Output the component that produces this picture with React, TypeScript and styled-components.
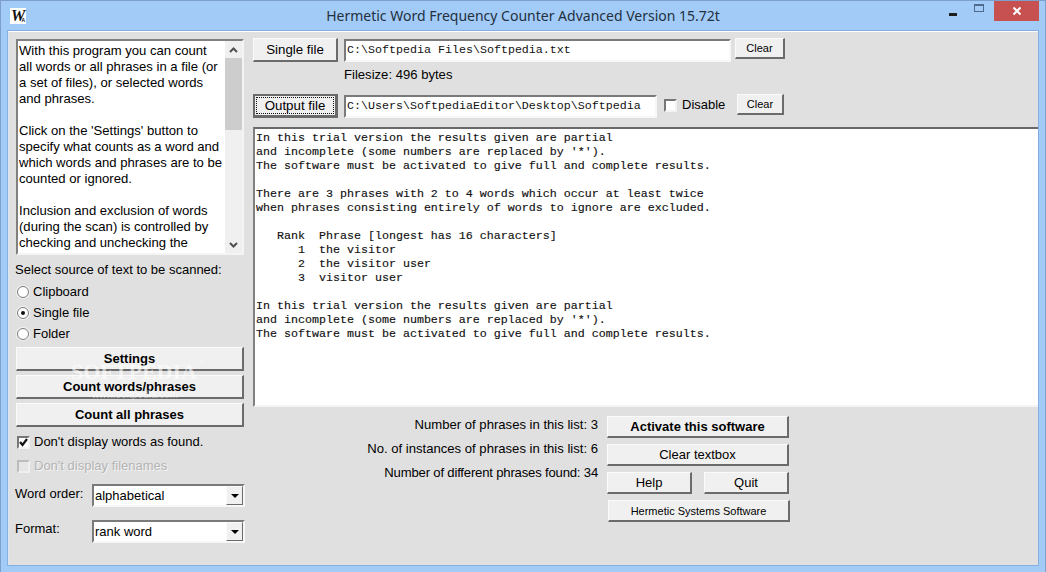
import React from "react";
import styled, { createGlobalStyle } from "styled-components";

const Global = createGlobalStyle`
  html, body { margin: 0; padding: 0; background: #a3cbf7; }
  * { box-sizing: border-box; }
`;

const Win = styled.div`
  width: 1046px; height: 572px; background: #a3cbf7; border: 1px solid #7f9fcb; border-bottom: 0;
  display: flex; flex-direction: column; overflow: hidden;
  font: 13.1px/16px "Liberation Sans", Arial, sans-serif; color: #000;
`;
const TitleBar = styled.div`
  height: 30px; flex: none; display: grid; grid-template-columns: 1fr auto 1fr; align-items: start;
`;
const Logo = styled.div`
  width: 16px; height: 16px; margin: 7px 0 0 9px; background: #fff; position: relative;
  font: italic bold 16px/15px "Liberation Serif", serif; color: #111;
  span { position: absolute; left: 1px; top: 0; letter-spacing: -1px; }
  small { position: absolute; right: 1px; bottom: 1px; font: bold 5px/5px "Liberation Sans", sans-serif; }
`;
const Title = styled.div`
  font: 14px/20px "Noto Sans", "Open Sans", sans-serif; color: #22303f; margin-top: 5px; white-space: nowrap;
`;
const Controls = styled.div`
  display: flex; justify-content: flex-end; align-items: flex-start; padding-right: 6px;
`;
const CtlBtn = styled.div`
  display: flex; align-items: center; justify-content: center; height: 20px;
`;
const MinBtn = styled(CtlBtn)`
  width: 27px;
  i { display: block; width: 8px; height: 3px; background: #1d1d1d; margin-top: 6px; }
`;
const MaxBtn = styled(CtlBtn)`
  width: 26px; margin-right: 2px;
  i { display: block; width: 10px; height: 8px; border: 1px solid #4e6a8d; border-top-width: 2px; margin-top: -7px; }
`;
const CloseBtn = styled(CtlBtn)`
  width: 45px; background: #c75050; color: #fff;
`;
const Client = styled.div`
  flex: 1; margin: 0 7px 7px 7px; background: #e0e0e0; border-top: 1px solid #fff; border-left: 1px solid #d9e6f5;
  display: grid; grid-template-columns: 228px 1fr; column-gap: 9px; padding: 7px 0 0 7px;
  outline: 1px solid #86aee0;
`;
const LeftCol = styled.div`
  display: flex; flex-direction: column; position: relative;
`;
const ListBox = styled.div`
  height: 216px; background: #fff; border: 2px solid; border-color: #808080 #f4f4f4 #f4f4f4 #808080;
  display: flex; overflow: hidden; flex: none;
`;
const ListText = styled.div`
  flex: 1; min-width: 0; padding: 2px 0 0 1px; white-space: pre; overflow: hidden;
`;
const Scroll = styled.div`
  width: 17px; background: #f0f0f0; display: flex; flex-direction: column; flex: none;
`;
const ScrollArrow = styled.div`
  height: 17px; display: flex; align-items: center; justify-content: center;
`;
const Thumb = styled.div`
  height: 72px; background: #cdcdcd; flex: none;
`;
const ScrollGap = styled.div`flex: 1;`;
const Label = styled.div<{ $tight?: boolean }>`
  white-space: nowrap;
  ${p => p.$tight && "letter-spacing: -0.18px;"}
`;
const SourceLabel = styled(Label)`margin: 7px 0 0 -1px; font-size: 13px;`;
const Radios = styled.div`
  display: flex; flex-direction: column; margin-top: 3px; font-size: 13px;
`;
const RadioRow = styled.div`
  height: 21px; display: flex; align-items: center; gap: 4px;
`;
const RadioDot = styled.span<{ $on?: boolean }>`
  width: 12px; height: 12px; border-radius: 50%; background: #fff; border: 1px solid #7a7a7a; margin-left: 1px;
  box-shadow: 0 0 0 1px #f2f2f2; position: relative; flex: none;
  &::after { content: ""; display: ${p => (p.$on ? "block" : "none")}; position: absolute; left: 3px; top: 3px; width: 4px; height: 4px; border-radius: 50%; background: #111; }
`;
const Btn = styled.div<{ $w?: number; $h?: number; $bold?: boolean; $size?: number }>`
  width: ${p => (p.$w ? `${p.$w}px` : "100%")}; height: ${p => p.$h ?? 24}px; flex: none;
  background: #f0f0f0; border-style: solid; border-width: 1px 2px 2px 1px; border-color: #fbfbfb #6b6b6b #6b6b6b #fbfbfb;
  display: flex; align-items: center; justify-content: center; white-space: nowrap;
  font-weight: ${p => (p.$bold ? 700 : 400)}; font-size: ${p => p.$size ?? 13}px;
`;
const BtnStack = styled.div`
  display: flex; flex-direction: column; gap: 4px; margin-top: 3px;
`;
const Check = styled.span<{ $disabled?: boolean }>`
  width: 13px; height: 13px; flex: none; background: ${p => (p.$disabled ? "#e6e6e6" : "#fff")};
  border: 2px solid; border-color: ${p => (p.$disabled ? "#bcbcbc #f0f0f0 #f0f0f0 #bcbcbc" : "#777 #f2f2f2 #f2f2f2 #777")};
  display: inline-flex; align-items: center; justify-content: center;
`;
const CheckRow = styled.div<{ $disabled?: boolean; $top: number }>`
  display: flex; align-items: center; gap: 4px; margin-top: ${p => p.$top}px; padding-left: 1px; font-size: 13px;
  color: ${p => (p.$disabled ? "#b4b4b4" : "#000")};
  ${p => p.$disabled && "text-shadow: 1px 1px 0 #f4f4f4;"}
`;
const SelectRow = styled.div<{ $top: number }>`
  display: flex; align-items: flex-start; width: 229px; margin-top: ${p => p.$top}px; justify-content: space-between;
`;
const SelectLabel = styled(Label)<{ $pad: number }>`
  margin-left: -1px; padding-top: ${p => p.$pad}px; font-size: 13px;
`;
const SelectBox = styled.div`
  width: 153px; height: 23px; background: #fff; border: 2px solid; border-color: #7a7a7a #f7f7f7 #f7f7f7 #7a7a7a;
  display: flex; align-items: center; padding-left: 1px; justify-content: space-between; font-size: 13px;
`;
const SelectArrow = styled.div`
  width: 17px; height: 19px; background: #f0f0f0; border: 1px solid; border-color: #fbfbfb #6b6b6b #6b6b6b #fbfbfb;
  display: flex; align-items: center; justify-content: center;
  &::after { content: ""; border: 4px solid transparent; border-top-color: #000; border-bottom: 0; }
`;
const RightCol = styled.div`
  display: flex; flex-direction: column; min-width: 0; margin-top: -1px;
`;
const FileRow = styled.div`
  display: flex; align-items: flex-start; height: 24px;
`;
const TextInput = styled.div<{ $w: number }>`
  width: ${p => p.$w}px; height: 23px; margin: 1px 0 0 6px; background: #fff; flex: none;
  border: 2px solid; border-color: #7a7a7a #f7f7f7 #f7f7f7 #7a7a7a; padding: 0 0 0 1px;
  font: 11.67px/19px "Liberation Mono", monospace; white-space: nowrap; overflow: hidden; color: #111;
`;
const Filesize = styled.div`
  margin: 5px 0 0 91px; height: 27px;
`;
const FocusBtn = styled(Btn)`
  border: 2px solid #6a6a6a; border-width: 2px 3px 3px 2px;
  position: relative;
  &::after { content: ""; position: absolute; inset: 1px; border: 1px dotted #111; }
`;
const DisableCheck = styled.div`
  display: flex; align-items: center; gap: 5px; margin: 3px 0 0 7px; width: 73px; flex: none; font-size: 13px;
`;
const ClearBtn = styled(Btn)<{ $gap: number }>`
  margin-left: ${p => p.$gap}px; font-size: 11px; padding-bottom: 1px;
`;
const Output = styled.div`
  height: 280px; margin-top: 9px; background: #fff; border-top: 2px solid #696969; border-left: 2px solid #808080;
  border-bottom: 2px solid #f4f4f4; padding: 2px 0 0 1px;
  font: 11.67px/14px "Liberation Mono", monospace; white-space: pre; color: #111; -webkit-text-stroke: 0.15px #111;
`;
const Bottom = styled.div`
  display: grid; grid-template-columns: 345px 182px; column-gap: 9px; margin-top: 9px;
`;
const Stats = styled.div`
  display: flex; flex-direction: column; gap: 8px; align-items: flex-end; padding-top: 1px;
`;
const Actions = styled.div`
  display: flex; flex-direction: column; gap: 6px;
`;
const ActionPair = styled.div`
  display: flex; justify-content: space-between;
`;
const OffsetBtn = styled(Btn)`margin-left: 1px; font-size: 11px;`;
const WMLayer = styled.div`
  position: absolute; left: 0; top: 0; width: 0; height: 0; pointer-events: none; z-index: 1;
`;
const Watermark = styled.div`
  position: absolute; left: 55px; top: 321px; color: #fff; opacity: 0.6;
  font: bold 22px/24px "Liberation Serif", serif; white-space: nowrap;
  sup { font: 5px/5px "Liberation Sans", sans-serif; vertical-align: top; margin-left: 2px; }
`;
const WatermarkSub = styled.div`
  position: absolute; left: 76px; top: 351px; color: #fff; opacity: 0.5;
  font: 10px/10px "Liberation Sans", sans-serif; white-space: nowrap;
`;

const listLines = `With this program you can count
all words or all phrases in a file (or
a set of files), or selected words
and phrases.

Click on the 'Settings' button to
specify what counts as a word and
which words and phrases are to be
counted or ignored.

Inclusion and exclusion of words
(during the scan) is controlled by
checking and unchecking the`;

const outputText = `In this trial version the results given are partial
and incomplete (some numbers are replaced by '*').
The software must be activated to give full and complete results.

There are 3 phrases with 2 to 4 words which occur at least twice
when phrases consisting entirely of words to ignore are excluded.

   Rank  Phrase [longest has 16 characters]
      1  the visitor
      2  the visitor user
      3  visitor user

In this trial version the results given are partial
and incomplete (some numbers are replaced by '*').
The software must be activated to give full and complete results.`;

const Chevron = ({ down }: { down?: boolean }) => (
  <svg width="9" height="6" viewBox="0 0 9 6">
    <path d={down ? "M1 1 L4.5 4.5 L8 1" : "M1 5 L4.5 1.5 L8 5"} fill="none" stroke="#505050" strokeWidth="2" />
  </svg>
);

const Tick = () => (
  <svg width="9" height="9" viewBox="0 0 9 9">
    <path d="M1 4 L3.5 7 L8 1" fill="none" stroke="#111" strokeWidth="2.2" />
  </svg>
);

export default function App() {
  return (
    <Win>
      <Global />
      <TitleBar>
        <Logo><span>W</span><small>A</small></Logo>
        <Title>Hermetic Word Frequency Counter Advanced Version 15.72t</Title>
        <Controls>
          <MinBtn><i /></MinBtn>
          <MaxBtn><i /></MaxBtn>
          <CloseBtn>
            <svg width="10" height="10" viewBox="0 0 10 10">
              <path d="M1.5 1.5 L8.5 8.5 M8.5 1.5 L1.5 8.5" stroke="#fff" strokeWidth="2" />
            </svg>
          </CloseBtn>
        </Controls>
      </TitleBar>
      <Client>
        <LeftCol>
          <ListBox>
            <ListText>{listLines}</ListText>
            <Scroll>
              <ScrollArrow><Chevron /></ScrollArrow>
              <Thumb />
              <ScrollGap />
              <ScrollArrow><Chevron down /></ScrollArrow>
            </Scroll>
          </ListBox>
          <SourceLabel>Select source of text to be scanned:</SourceLabel>
          <Radios>
            <RadioRow><RadioDot />Clipboard</RadioRow>
            <RadioRow><RadioDot $on />Single file</RadioRow>
            <RadioRow><RadioDot />Folder</RadioRow>
          </Radios>
          <BtnStack>
            <Btn $bold>Settings</Btn>
            <Btn $bold>Count words/phrases</Btn>
            <Btn $bold>Count all phrases</Btn>
          </BtnStack>
          <WMLayer>
            <Watermark>SOFTPEDIA<sup>™</sup></Watermark>
            <WatermarkSub>www.softpedia.com</WatermarkSub>
          </WMLayer>
          <CheckRow $top={7}><Check><Tick /></Check>Don't display words as found.</CheckRow>
          <CheckRow $top={8} $disabled><Check $disabled />Don't display filenames</CheckRow>
          <SelectRow $top={10}>
            <SelectLabel $pad={2}>Word order:</SelectLabel>
            <SelectBox>alphabetical<SelectArrow /></SelectBox>
          </SelectRow>
          <SelectRow $top={13}>
            <SelectLabel $pad={1}>Format:</SelectLabel>
            <SelectBox>rank word<SelectArrow /></SelectBox>
          </SelectRow>
        </LeftCol>
        <RightCol>
          <FileRow>
            <Btn $w={85} $size={13.3}>Single file</Btn>
            <TextInput $w={387}>C:\Softpedia Files\Softpedia.txt</TextInput>
            <ClearBtn $w={50} $h={21} $gap={4}>Clear</ClearBtn>
          </FileRow>
          <Filesize>Filesize: 496 bytes</Filesize>
          <FileRow>
            <FocusBtn $w={85} $size={13.3}>Output file</FocusBtn>
            <TextInput $w={313}>C:\Users\SoftpediaEditor\Desktop\Softpedia</TextInput>
            <DisableCheck><Check />Disable</DisableCheck>
            <ClearBtn $w={47} $h={21} $gap={0}>Clear</ClearBtn>
          </FileRow>
          <Output>{outputText}</Output>
          <Bottom>
            <Stats>
              <Label>Number of phrases in this list: 3</Label>
              <Label>No. of instances of phrases in this list: 6</Label>
              <Label $tight>Number of different phrases found: 34</Label>
            </Stats>
            <Actions>
              <Btn $h={22} $bold>Activate this software</Btn>
              <Btn $h={22}>Clear textbox</Btn>
              <ActionPair>
                <Btn $w={85} $h={22}>Help</Btn>
                <Btn $w={85} $h={22}>Quit</Btn>
              </ActionPair>
              <OffsetBtn $h={22}>Hermetic Systems Software</OffsetBtn>
            </Actions>
          </Bottom>
        </RightCol>
      </Client>
    </Win>
  );
}
